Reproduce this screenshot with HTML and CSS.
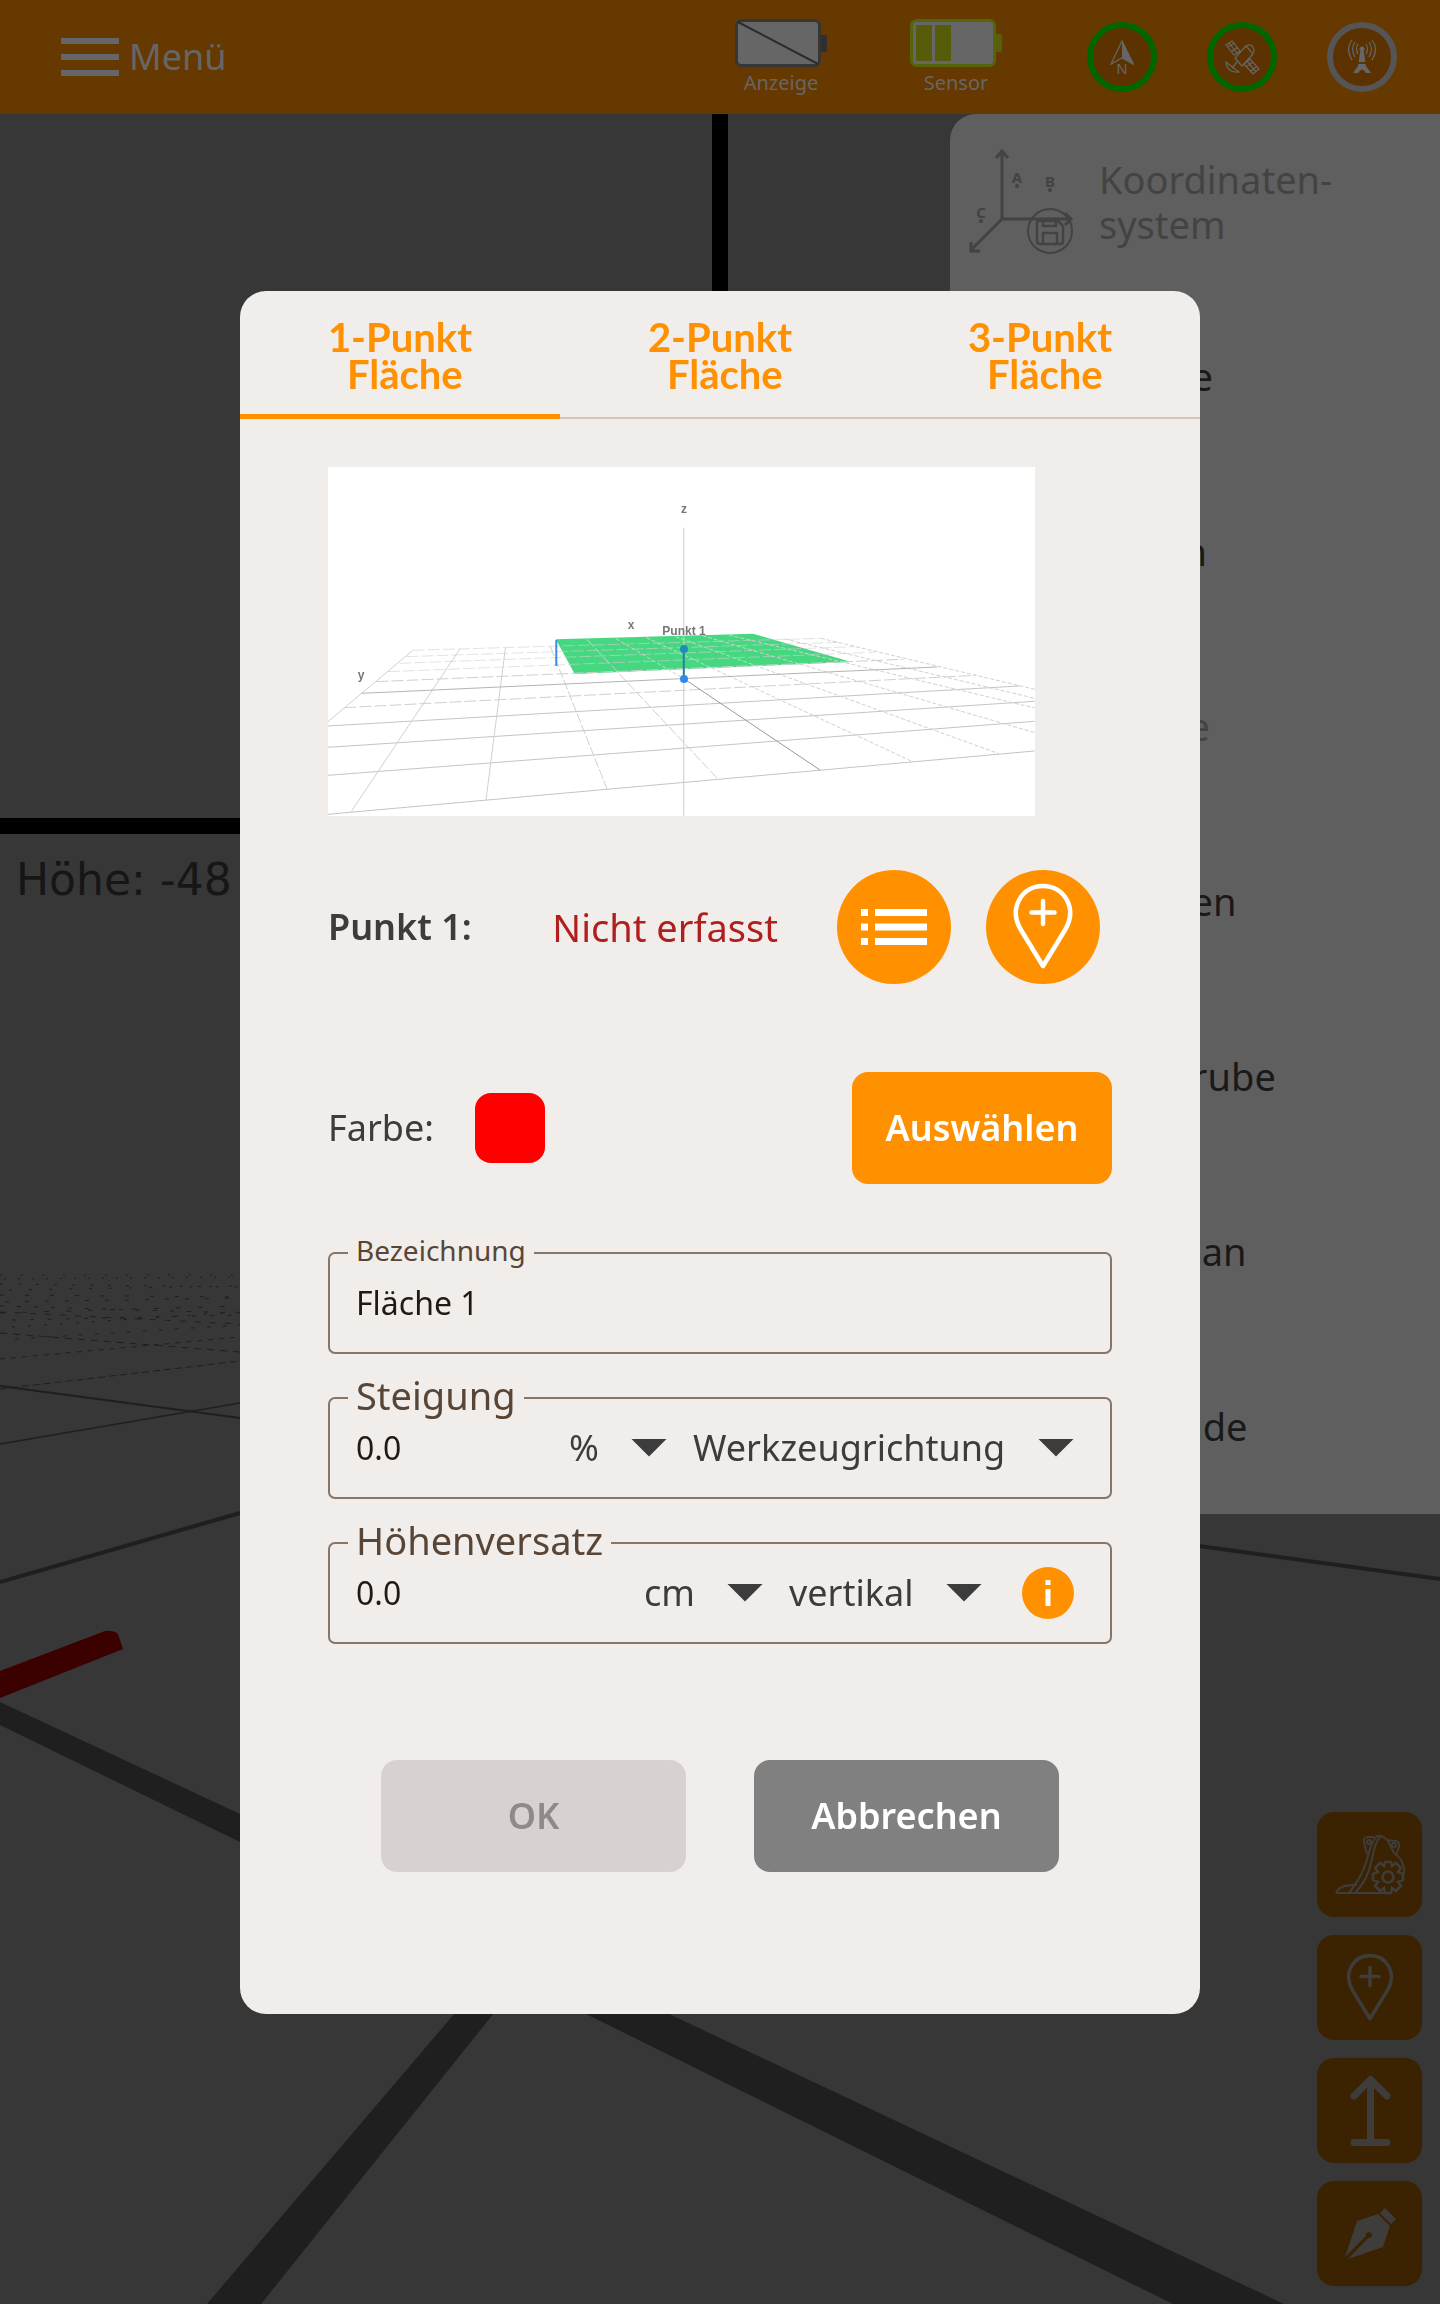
FILE: index.html
```html
<!DOCTYPE html>
<html lang="de">
<head>
<meta charset="utf-8">
<meta name="viewport" content="width=device-width, initial-scale=1">
<title>Fläche anlegen</title>
<link rel="stylesheet" href="styles.css">
</head>
<body>
<svg width="0" height="0" class="defs" aria-hidden="true">
  <symbol id="pin" viewBox="0 0 114 114">
    <path d="M57 96 35 60C22 38 36 16 57 16S92 38 79 60ZM57 31V54M45.500 42.500H68.500" fill="none" stroke="currentColor" stroke-width="4.500" stroke-linejoin="round" stroke-linecap="round"/>
  </symbol>
</svg>
<div class="app">
  <header class="topbar">
    <button class="menu" type="button">
      <svg width="58" height="40" viewBox="0 0 58 40" aria-hidden="true"><path d="M0 4H58M0 20H58M0 36H58" stroke="currentColor" stroke-width="6"/></svg>
      <span>Menü</span>
    </button>
    <div class="status">
      <div class="battery">
        <svg width="92" height="48" viewBox="0 0 92 48" aria-hidden="true"><rect x="84" y="16" width="8" height="17" rx="2" fill="#2f2f2f"/><rect x="1.500" y="1.500" width="83" height="45" rx="5" fill="#666" stroke="#363636" stroke-width="3"/><path d="M3 3 83 45" stroke="#2c2c2c" stroke-width="2"/></svg>
        <span>Anzeige</span>
      </div>
      <div class="battery">
        <svg width="92" height="48" viewBox="0 0 92 48" aria-hidden="true"><rect x="84" y="15" width="8" height="18" rx="2" fill="#56600a"/><rect x="1.500" y="1.500" width="83" height="45" rx="5" fill="#666" stroke="#56650a" stroke-width="3"/><rect x="6" y="6" width="16" height="36" fill="#565c0a"/><rect x="25" y="6" width="16" height="36" fill="#565c0a"/></svg>
        <span>Sensor</span>
      </div>
    </div>
    <div class="signals">
      <svg width="70" height="70" viewBox="0 0 70 70" role="img" aria-label="Nordrichtung">
        <circle cx="35" cy="35" r="32" fill="#5c3300" stroke="#060" stroke-width="6"/>
        <path d="M35 19 24 42 35 36 46 42Z" fill="none" stroke="#666" stroke-width="1.200"/><path d="M35 18V36L47 42Z" fill="#666"/>
        <text x="35" y="52" text-anchor="middle" class="north">N</text>
      </svg>
      <svg width="70" height="70" viewBox="0 0 70 70" role="img" aria-label="Satellit">
        <circle cx="35" cy="35" r="32" fill="#5c3300" stroke="#060" stroke-width="6"/>
        <g fill="none" stroke="#666" stroke-width="1.200"><path d="M28 36 39 24 46 32 35 44ZM39 24Q47 20 47 31M19 23 25 19 33 29 27 33ZM22 21 30 31M20 25 28 21M24 30 31 25M37 42 43 37 52 47 46 52ZM40 39 49 50M39 45 46 40M43 50 50 44M19 40Q20 51 32 50ZM25 46 30 40M28 36 33 42"/></g>
      </svg>
      <svg width="70" height="70" viewBox="0 0 70 70" role="img" aria-label="Basisstation">
        <circle cx="35" cy="35" r="32" fill="#5c3300" stroke="#555" stroke-width="6"/>
        <path d="M33.500 28H36.500L39 44 44 51H39Q35 44 31 51H26L31 44Z" fill="#666"/><path d="M31 41H39" stroke="#5c3300" stroke-width="2"/>
        <circle cx="35" cy="27" r="2.500" fill="#666"/>
        <path d="M31 32Q28 27 31 22M39 32Q42 27 39 22M28 35Q23 27 28 20M42 35Q47 27 42 20M25 38Q18 27 25 18M45 38Q52 27 45 18" fill="none" stroke="#666" stroke-width="1.200"/>
      </svg>
    </div>
  </header>

  <main class="workspace">
    <svg class="scene" viewBox="0 114 1440 2190" preserveAspectRatio="none" aria-hidden="true">
      <path d="M712 114H728V818H1440V834H0V818H712Z" fill="#000"/>
      <g fill="none" stroke="#1f1f1f">
        <g stroke-width="1">
          <path d="M0 1275H240" stroke-dasharray="2 19"/><path d="M4 1279 240 1277" stroke-dasharray="2 12"/><path d="M0 1284 240 1287" stroke-dasharray="3 15"/>
          <path d="M9 1290 240 1286" stroke-dasharray="3 17"/><path d="M0 1295 240 1297" stroke-dasharray="4 21"/><path d="M5 1302 240 1298" stroke-dasharray="4 16"/>
          <path d="M0 1306 240 1313" stroke-dasharray="4 13"/><path d="M0 1313 240 1306" stroke-dasharray="5 17"/><path d="M12 1320 240 1315" stroke-dasharray="4 14"/>
          <path d="M0 1312 240 1324" stroke-dasharray="6 9"/><path d="M12 1327 240 1312" stroke-dasharray="3 13"/><path d="M15 1339 240 1325" stroke-dasharray="4 12"/>
          <path d="M0 1333 240 1352" stroke-dasharray="7 6"/><path d="M0 1359 240 1337" stroke-dasharray="5 6"/><path d="M0 1389 240 1361" stroke-dasharray="7 4"/>
        </g>
        <path d="M0 1386 240 1418" stroke-width="2"/>
        <path d="M0 1444 240 1403" stroke-width="1.500"/>
        <path d="M0 1582 240 1513M1199 1546 1440 1579" stroke-width="4"/>
      </g>
      <path d="M0 1671 105 1631Q113 1630 118 1634L123 1649 0 1698Z" fill="#3b0000"/>
      <path d="M0 1702 240 1814V1842L0 1725ZM455 2013H494L261 2304H207ZM584 2013H667L1284 2304H1173Z" fill="#1f1f1f"/>
    </svg>
    <p class="height">Höhe: -48</p>
    <nav class="panel" aria-label="Objekte">
      <button class="entry off" type="button">
        <svg width="106" height="110" viewBox="0 0 106 110" aria-hidden="true">
          <g fill="none" stroke="currentColor" stroke-width="3"><path d="M34 5V72H103M34 72 3 103M28 11 34 4 40 11M97 66 103 72 97 78M3 95V104H12"/><circle cx="82" cy="84" r="22" stroke-width="2"/><path d="M70 74H90L95 79V94Q95 97 92 97H72Q69 97 69 94V75ZM75 74V79H88V74M75 97V86H89V97" stroke-width="2.500"/></g>
          <g fill="currentColor"><circle cx="49" cy="39" r="2"/><circle cx="82" cy="43" r="2"/><circle cx="13" cy="74" r="2"/><text x="49" y="36" text-anchor="middle">A</text><text x="82" y="40" text-anchor="middle">B</text><text x="13" y="71" text-anchor="middle">C</text></g>
        </svg>
        <span>Koordinaten-<br>system</span>
      </button>
      <button class="entry" type="button"><i class="slot"></i><span>Fläche</span></button>
      <button class="entry" type="button"><i class="slot"></i><span>Linien</span></button>
      <button class="entry off" type="button"><i class="slot"></i><span>Ebene</span></button>
      <button class="entry" type="button"><i class="slot"></i><span>Flächen</span></button>
      <button class="entry" type="button"><i class="slot"></i><span>Baugrube</span></button>
      <button class="entry" type="button"><i class="slot"></i><span>Bauplan</span></button>
      <button class="entry" type="button"><i class="slot"></i><span>Gelände</span></button>
    </nav>
    <div class="tools">
      <button class="tool" type="button" aria-label="Löffel einstellen">
        <svg width="105" height="105" viewBox="0 0 105 105" aria-hidden="true"><g fill="none" stroke="currentColor" stroke-width="2"><path d="M19 81Q22 72 40 73M19 81H75M32 81Q46 64 51 44Q56 25 61 24Q68 23 72 31L77 41Q88 48 87 62M38 81Q51 68 55 47Q58 30 63 25M50 42 47 30Q46 25 51 25H57M70 28 79 29Q83 30 82 35L79 43"/><circle cx="52" cy="30" r="2"/><circle cx="77" cy="33" r="2"/><circle cx="71" cy="65" r="5.500" stroke-width="2.500"/><path d="M68 50H74L75 54 79 51 84 56 81 60 86 62V68L81 70 84 74 79 79 75 76 74 81H68L67 76 63 79 58 74 61 70 56 68V62L61 60 58 56 63 51 67 54Z" stroke-width="2.500"/></g></svg>
      </button>
      <button class="tool" type="button" aria-label="Punkt hinzufügen"><svg width="90" height="90" aria-hidden="true"><use href="#pin"/></svg></button>
      <button class="tool" type="button" aria-label="Höhe anheben">
        <svg width="105" height="105" viewBox="0 0 105 105" aria-hidden="true"><path d="M53.500 22V84M37 38 53.500 21.500 70 38M37 84.500H70" fill="none" stroke="currentColor" stroke-width="7" stroke-linecap="round" stroke-linejoin="round"/></svg>
      </button>
      <button class="tool" type="button" aria-label="Zeichnen">
        <svg width="105" height="105" viewBox="0 0 105 105" aria-hidden="true"><g fill="currentColor"><path d="M28 76 40 40 61 33 73 45 66 66 31 78 51 57A3 3 0 1 0 49 55ZM63 32 68 27 79 38 74 43Z"/></g></svg>
      </button>
    </div>
  </main>
</div>

<div class="overlay">
  <section class="dialog" role="dialog" aria-modal="true" aria-label="Fläche anlegen">
    <div class="tabs" role="tablist">
      <button class="tab active" type="button" role="tab" aria-selected="true">1-Punkt<br>&nbsp;Fläche</button>
      <button class="tab" type="button" role="tab" aria-selected="false">2-Punkt<br>&nbsp;Fläche</button>
      <button class="tab" type="button" role="tab" aria-selected="false">3-Punkt<br>&nbsp;Fläche</button>
    </div>
    <form class="content">
      <svg class="preview" viewBox="0 0 707 349" role="img" aria-label="Fläche durch Punkt 1">
        <rect width="707" height="349" fill="#fff"/>
        <g transform="scale(.4847 .3333) translate(-58 -51)" fill="none">
          <path d="M528 568 935 551 1138 636 567 672Z" fill="#46d881"/>
          <g stroke="#d0d0d0" class="thin">
            <path d="M58 1093 1516 903M58 976 1516 814M58 892 1516 754M58 828 1484 708" stroke="#c4c4c4"/>
            <path d="M92 773 1395 676M158 695 1245 628" stroke-dasharray="12 3"/>
            <path d="M182 665 1185 607M205 640 1145 590M220 620 1110 577M233 601 1075 565" stroke-dasharray="12 3" opacity=".6"/>
            <path d="M233 601 58 815M330 597 106 1085M424 594 384 1050"/>
            <path d="M517 590 634 1018M592 568 863 988" stroke-dasharray="10 2"/>
            <path d="M652 566 792 686M715 563 1264 935M775 560 1442 911M830 557 1516 848M885 555 1516 774M1000 567 1516 745M1075 565 1516 718" stroke-dasharray="4 2"/>
            <path d="M128 730 1315 651" stroke="#b4b4b4"/>
            <path d="M792 686 1073 960" stroke="#999"/>
            <path d="M792 233V1098" stroke="#ccc"/>
          </g>
          <path d="M529 570V648" stroke="#3c8ce8" class="edge"/>
          <path d="M792 598V686" stroke="#16889a" class="thick"/>
        </g>
        <circle cx="356" cy="182" r="4" fill="#218cb8"/><circle cx="356" cy="212" r="4" fill="#3188ec"/>
        <g text-anchor="middle" class="axis"><text x="356" y="46">z</text><text x="303" y="162">x</text><text x="33" y="212">y</text><text x="356" y="168">Punkt 1</text></g>
      </svg>

      <div class="point">
        <strong>Punkt 1:</strong>
        <span class="missing">Nicht erfasst</span>
        <button class="round" type="button" aria-label="Punkt aus Liste">
          <svg width="114" height="114" viewBox="0 0 114 114" aria-hidden="true"><path d="M24 42.500H31M38 42.500H90M24 57H31M38 57H90M24 71.500H31M38 71.500H90" stroke="currentColor" stroke-width="7"/></svg>
        </button>
        <button class="round" type="button" aria-label="Punkt erfassen"><svg width="114" height="114" aria-hidden="true"><use href="#pin"/></svg></button>
      </div>

      <div class="colour">
        <span>Farbe:</span><span class="swatch"></span>
        <button class="btn choose" type="button">Auswählen</button>
      </div>

      <div class="fields">
        <div class="field">
          <label class="legend small" for="name">Bezeichnung</label>
          <input id="name" type="text" value="Fläche 1">
        </div>
        <div class="field">
          <label class="legend" for="slope">Steigung</label>
          <input id="slope" type="text" value="0.0">
          <span class="select"><select aria-label="Einheit Steigung"><option>%</option></select></span>
          <span class="select"><select aria-label="Richtung"><option>Werkzeugrichtung</option></select></span>
        </div>
        <div class="field">
          <label class="legend" for="offset">Höhenversatz</label>
          <input id="offset" type="text" value="0.0">
          <span class="select"><select aria-label="Einheit Versatz"><option>cm</option></select></span>
          <span class="select"><select aria-label="Versatzrichtung"><option>vertikal</option></select></span>
          <button class="info" type="button" aria-label="Information">
            <svg width="52" height="52" viewBox="0 0 52 52" aria-hidden="true"><path d="M26 13V18M26 22V39" stroke="currentColor" stroke-width="5"/></svg>
          </button>
        </div>
      </div>

      <div class="actions">
        <button class="btn ok" type="submit" disabled>OK</button>
        <button class="btn cancel" type="button">Abbrechen</button>
      </div>
    </form>
  </section>
</div>
</body>
</html>
```
FILE: styles.css
```css
* {
  box-sizing: border-box;
}

body {
  margin: 0;
  font-family: "Noto Sans", sans-serif;
  font-size: 36px;
  line-height: 48px;
  color: #3c3c3c;
  background: #373737;
}

button,
input,
select {
  margin: 0;
  padding: 0;
  border: 0;
  background: none;
  font: inherit;
  color: inherit;
}

svg {
  display: block;
  flex: none;
}

.defs {
  position: absolute;
}

.app {
  min-height: 100vh;
  display: flex;
  flex-direction: column;
}

/* Top bar */
.topbar {
  display: flex;
  align-items: center;
  height: 114px;
  padding: 0 43px 0 61px;
  background: #663900;
  color: #666;
}

.menu {
  display: flex;
  align-items: center;
  gap: 10px;
  margin-right: auto;
}

.status {
  display: flex;
  gap: 83px;
  margin-right: 85px;
}

.battery {
  display: flex;
  flex-direction: column;
  align-items: center;
  gap: 4px;
  font-size: 20px;
  line-height: 24px;
}

.signals {
  display: flex;
  gap: 50px;
}

.north {
  font-size: 15px;
  fill: #666;
}

/* Workspace behind the dialog */
.workspace {
  position: relative;
  flex: 1;
  display: flex;
  flex-direction: column;
  align-items: flex-end;
  justify-content: space-between;
  padding-bottom: 18px;
}

.scene {
  position: absolute;
  inset: 0;
  width: 100%;
  height: 100%;
}

.height {
  position: absolute;
  left: 16px;
  top: 736px;
  margin: 0;
  font-family: "DejaVu Sans", sans-serif;
  font-size: 44px;
  line-height: 60px;
  color: #161616;
}

.panel {
  position: relative;
  width: 34%;
  min-width: 490px;
  background: #5f5f5f;
  border-radius: 26px 0 0 0;
}

.entry {
  display: flex;
  align-items: center;
  gap: 25px;
  width: 100%;
  height: 175px;
  padding-left: 18px;
  font-size: 38px;
  line-height: 45px;
  text-align: left;
  color: #191919;
}

.entry.off {
  color: #434343;
}

.entry text {
  font-size: 15px;
  font-weight: 700;
}

.slot {
  width: 106px;
}

.tools {
  position: relative;
  display: flex;
  flex-direction: column;
  gap: 18px;
  margin-right: 18px;
}

.tool {
  display: flex;
  align-items: center;
  justify-content: center;
  width: 105px;
  height: 105px;
  border-radius: 17px;
  background: #3b2200;
  color: #3e3d3b;
}

/* Dialog */
.overlay {
  position: fixed;
  inset: 0;
  display: flex;
  align-items: center;
  justify-content: center;
}

.dialog {
  width: 67%;
  max-width: 960px;
  border-radius: 26px;
  background: #f0edeb;
  overflow: hidden;
}

.tabs {
  display: flex;
  box-shadow: inset 0 -2px #d8c3b4;
}

.tab {
  flex: 1;
  height: 128px;
  padding-top: 7px;
  border-bottom: 5px solid transparent;
  font-family: Lato, sans-serif;
  font-size: 40px;
  font-weight: 700;
  line-height: 37px;
  color: #ff9100;
}

.tab.active {
  border-color: #ff9100;
}

.content {
  padding: 48px 88px 142px;
}

.preview {
  width: 91%;
  max-width: 707px;
  height: auto;
}

.thin,
.thin path {
  stroke-width: 1px;
  vector-effect: non-scaling-stroke;
}

.edge,
.thick {
  stroke-width: 2px;
  vector-effect: non-scaling-stroke;
}

.axis {
  font: bold 12px "Liberation Sans", sans-serif;
  fill: #777;
}

.point {
  display: flex;
  align-items: center;
  gap: 35px;
  margin-top: 54px;
  padding-right: 12px;
}

.point strong {
  font-weight: 600;
}

.missing {
  margin-left: auto;
  margin-right: 24px;
  font-size: 38px;
  color: #b01e1e;
}

.round {
  flex: none;
  width: 114px;
  height: 114px;
  border-radius: 50%;
  background: #ff9100;
  color: #fff;
}

.colour {
  display: flex;
  align-items: center;
  gap: 41px;
  margin-top: 88px;
}

.swatch {
  width: 70px;
  height: 70px;
  border-radius: 16px;
  background: #f00;
}

.btn {
  height: 112px;
  border-radius: 16px;
  font-weight: 600;
  color: #fff;
}

.choose {
  width: 260px;
  margin-left: auto;
  background: #ff9100;
}

.fields {
  display: flex;
  flex-direction: column;
  gap: 43px;
  margin-top: 68px;
}

.field {
  position: relative;
  display: flex;
  align-items: center;
  gap: 26px;
  height: 102px;
  padding: 0 36px 0 26px;
  border: 2px solid #8a7565;
  border-radius: 7px;
}

.legend {
  position: absolute;
  left: 18px;
  top: -28px;
  padding: 0 8px;
  background: #f0edeb;
  font-size: 38px;
  color: #594536;
}

.legend.small {
  font-size: 28px;
}

.field input {
  flex: 1;
  min-width: 0;
  font-size: 32px;
  color: #201a14;
  outline: 0;
}

.select {
  display: grid;
  align-items: center;
}

.select select {
  grid-area: 1 / 1;
  padding-right: 68px;
  appearance: none;
}

.select::after {
  content: "";
  grid-area: 1 / 1;
  justify-self: end;
  width: 36px;
  height: 18px;
  background: #3c3c3c;
  clip-path: polygon(0 0, 100% 0, 50% 100%);
  pointer-events: none;
}

.info {
  width: 52px;
  height: 52px;
  margin-left: 14px;
  border-radius: 50%;
  background: #ff9100;
  color: #fff;
}

.actions {
  display: flex;
  justify-content: center;
  gap: 68px;
  margin-top: 116px;
}

.actions .btn {
  width: 305px;
}

.ok {
  background: #d7d2d0;
  color: #8f8a87;
}

.cancel {
  background: #808080;
}
```
